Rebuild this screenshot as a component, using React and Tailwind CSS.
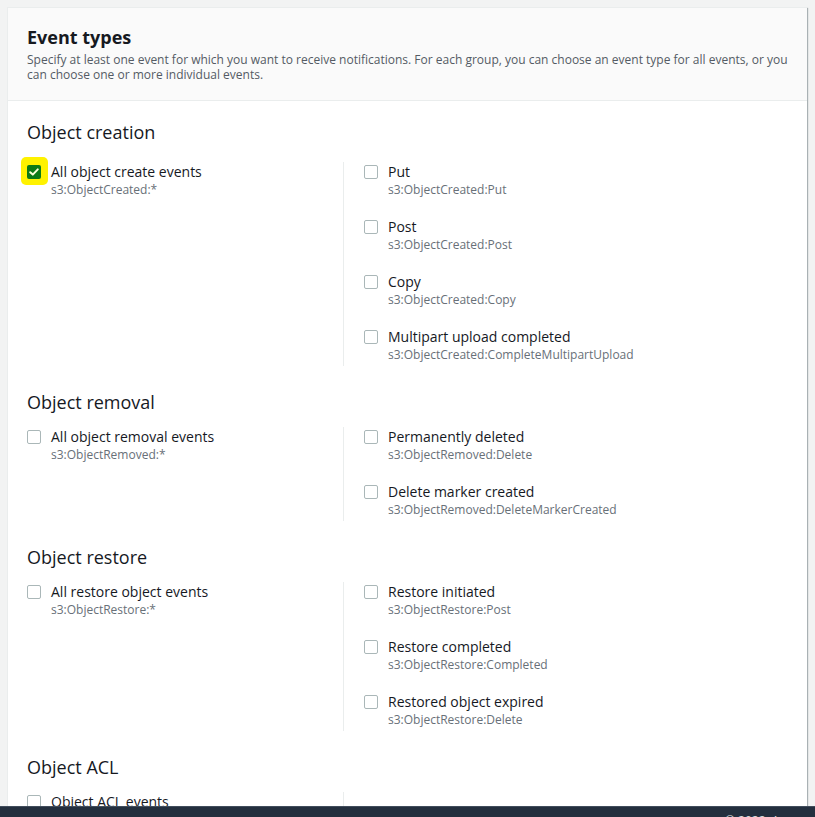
import React from "react";

const font = { fontFamily: '"Open Sans", "Noto Sans", Arial, sans-serif' };

const sections = [
  {
    title: "Object creation",
    all: { label: "All object create events", code: "s3:ObjectCreated:*", checked: true },
    items: [
      { label: "Put", code: "s3:ObjectCreated:Put" },
      { label: "Post", code: "s3:ObjectCreated:Post" },
      { label: "Copy", code: "s3:ObjectCreated:Copy" },
      { label: "Multipart upload completed", code: "s3:ObjectCreated:CompleteMultipartUpload" },
    ],
  },
  {
    title: "Object removal",
    all: { label: "All object removal events", code: "s3:ObjectRemoved:*" },
    items: [
      { label: "Permanently deleted", code: "s3:ObjectRemoved:Delete" },
      { label: "Delete marker created", code: "s3:ObjectRemoved:DeleteMarkerCreated" },
    ],
  },
  {
    title: "Object restore",
    all: { label: "All restore object events", code: "s3:ObjectRestore:*" },
    items: [
      { label: "Restore initiated", code: "s3:ObjectRestore:Post" },
      { label: "Restore completed", code: "s3:ObjectRestore:Completed" },
      { label: "Restored object expired", code: "s3:ObjectRestore:Delete" },
    ],
  },
  {
    title: "Object ACL",
    all: { label: "Object ACL events", code: "s3:ObjectAcl:Put" },
    items: [],
  },
];

function Box({ checked }) {
  if (checked) {
    return (
      <span className="relative mt-[3px] flex h-[14px] w-[14px] shrink-0">
        <span className="absolute -left-[6px] -top-[8px] h-[28px] w-[27px] rounded-[5px] bg-[#fff200]" />
        <span className="relative flex h-[14px] w-[14px] items-center justify-center rounded-[2px] bg-[#0b7a16]">
          <svg viewBox="0 0 14 14" className="h-[14px] w-[14px]">
            <path d="M3.2 7.2 L5.8 9.6 L10.8 4.4" fill="none" stroke="#fbffd8" strokeWidth="2" strokeLinecap="round" strokeLinejoin="round" />
          </svg>
        </span>
      </span>
    );
  }
  return <span className="mt-[3px] h-[14px] w-[14px] shrink-0 rounded-[2px] border border-[#aab7b8] bg-white" />;
}

function Option({ label, code, checked }) {
  return (
    <div className="flex gap-[10px]">
      <Box checked={checked} />
      <div className="flex flex-col">
        <span className="whitespace-nowrap text-[14px] leading-[20px] text-[#16191f]">{label}</span>
        <span className="whitespace-nowrap text-[12px] leading-[16px] text-[#687078]">{code}</span>
      </div>
    </div>
  );
}

export default function App() {
  return (
    <div className="relative h-[817px] w-[815px] overflow-hidden bg-[#f2f3f3]" style={font}>
      <div className="ml-[7px] mt-[7px] w-[800px] border-l border-t border-[#eaeded] bg-white shadow-[1px_1px_1px_0_rgba(0,28,36,0.3)]">
        <div className="border-b border-[#eaeded] bg-[#fafafa] px-[19px] pb-[18px] pt-[18px]">
          <h2 className="text-[18px] font-bold leading-[22px] text-[#16191f]">Event types</h2>
          <p className="mt-[4px] text-[12px] leading-[15px] text-[#545b64]">
            Specify at least one event for which you want to receive notifications. For each group, you can choose an event type for all events, or you can choose one or more individual events.
          </p>
        </div>
        <div className="flex flex-col gap-[25px] px-[19px] pt-[20px]">
          {sections.map((s, i) => (
            <div key={s.title} className={i === 0 ? "flex flex-col gap-[19px]" : "flex flex-col gap-[14px]"}>
              <h3 className="text-[18px] leading-[22px] text-[#16191f]">{s.title}</h3>
              <div className="flex">
                <div className="w-[316px] pb-[3px]">
                  <Option {...s.all} />
                </div>
                <div className="flex flex-1 flex-col gap-[19px] border-l border-[#eaeded] pb-[3px] pl-[20px]">
                  {s.items.map((it) => (
                    <Option key={it.label} {...it} />
                  ))}
                  {s.items.length === 0 && <div className="h-[40px]" />}
                </div>
              </div>
            </div>
          ))}
        </div>
      </div>
      <div className="absolute bottom-0 left-0 h-[11px] w-full overflow-hidden border-t border-[#414d5c] bg-[#232f3e] pl-[725px]">
        <span className="mt-[6px] block whitespace-nowrap text-[12px] leading-[15px] text-[#d5dbdb]">© 2022, Amazon Web Services, Inc.</span>
      </div>
    </div>
  );
}
